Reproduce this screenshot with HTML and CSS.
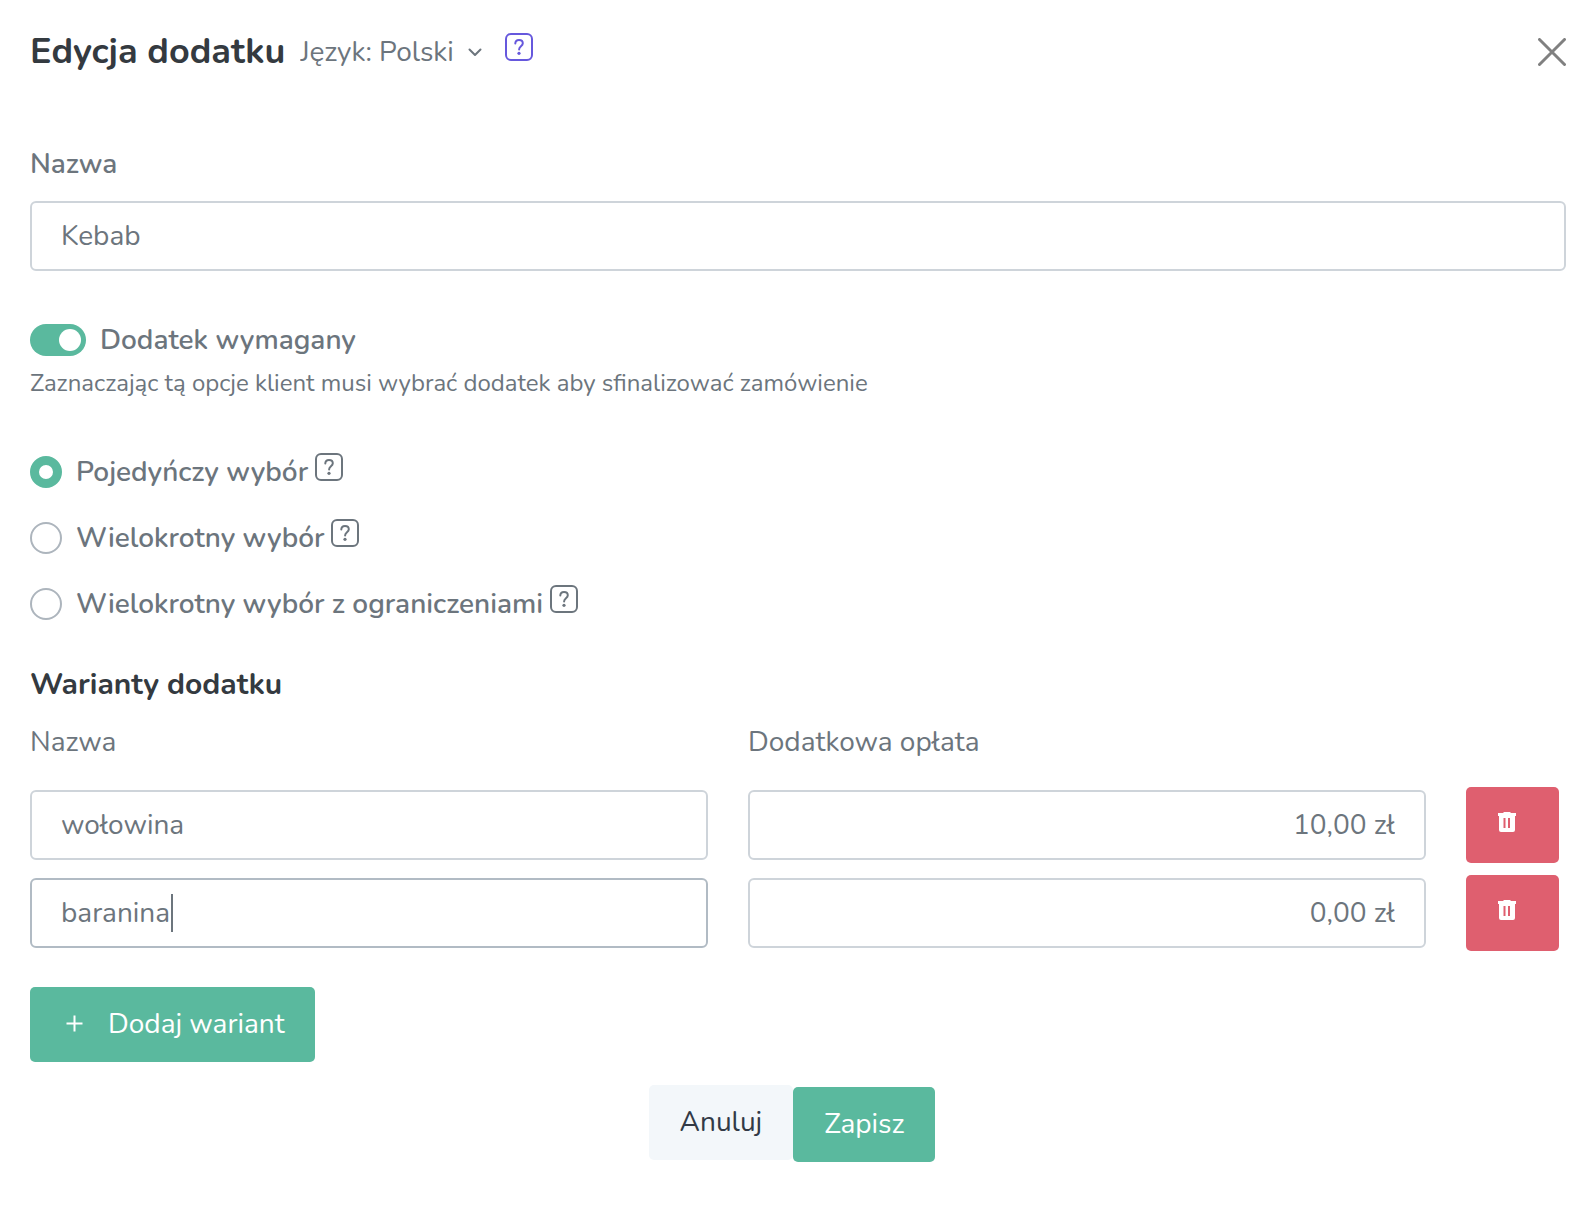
FILE: index.html
```html
<!DOCTYPE html>
<html lang="pl">
<head>
    <meta charset="UTF-8">
    <meta name="viewport" content="width=device-width, initial-scale=1">
    <title>Edycja dodatku</title>
    <link rel="stylesheet" href="styles.css">
</head>
<body>
<svg class="sprite" aria-hidden="true">
    <symbol id="icon-help" viewBox="0 0 28 28">
        <rect x="1" y="1" width="26" height="26" rx="5" fill="none" stroke="currentColor" stroke-width="2"/>
        <path d="M10.3 10.6C10.3 8.2 11.9 6.9 14 6.9c2.200 0 3.800 1.400 3.800 3.400 0 3-3.700 3.100-3.700 6.200" fill="none" stroke="currentColor" stroke-width="2" stroke-linecap="round"/>
        <circle cx="14" cy="20.300" r="1.600" fill="currentColor"/>
    </symbol>
    <symbol id="icon-trash" viewBox="0 0 18 20">
        <path fill="currentColor" fill-rule="evenodd" d="M5.500 0h7v1H18v3h-1v14a2 2 0 0 1-2 2H3a2 2 0 0 1-2-2V4H0V1h5.500zM5.500 6v10h2V6zM10 6v10h2V6z"/>
    </symbol>
</svg>
<form class="modal">
    <header class="modal-header">
        <h1 class="title">Edycja dodatku</h1>
        <div class="lang">
            <select class="lang-select" aria-label="Język">
                <option>Język: Polski</option>
            </select>
            <svg class="chevron" viewBox="0 0 14 9" aria-hidden="true"><path d="M1.500 1.500L7 7l5.500-5.500" fill="none" stroke="currentColor" stroke-width="2" stroke-linecap="round" stroke-linejoin="round"/></svg>
        </div>
        <button type="button" class="help help-main" aria-label="Pomoc"><svg><use href="#icon-help"/></svg></button>
        <button type="button" class="close" aria-label="Zamknij">
            <svg viewBox="0 0 28 28"><path d="M1.500 1.500l25 25M26.500 1.500l-25 25" stroke="currentColor" stroke-width="3" stroke-linecap="round"/></svg>
        </button>
    </header>

    <div class="field">
        <label class="label" for="name">Nazwa</label>
        <input class="input" id="name" type="text" value="Kebab">
    </div>

    <div class="required">
        <label class="check"><input class="switch" type="checkbox" checked>Dodatek wymagany</label>
        <p class="hint">Zaznaczając tą opcje klient musi wybrać dodatek aby sfinalizować zamówienie</p>
    </div>

    <div class="choices">
        <div class="choice">
            <label class="check"><input class="radio" type="radio" name="choice" checked>Pojedyńczy wybór</label>
            <button type="button" class="help" aria-label="Pomoc"><svg><use href="#icon-help"/></svg></button>
        </div>
        <div class="choice">
            <label class="check"><input class="radio" type="radio" name="choice">Wielokrotny wybór</label>
            <button type="button" class="help" aria-label="Pomoc"><svg><use href="#icon-help"/></svg></button>
        </div>
        <div class="choice">
            <label class="check"><input class="radio" type="radio" name="choice">Wielokrotny wybór z ograniczeniami</label>
            <button type="button" class="help" aria-label="Pomoc"><svg><use href="#icon-help"/></svg></button>
        </div>
    </div>

    <h2 class="subtitle">Warianty dodatku</h2>
    <div class="row row-head">
        <label for="variant-1">Nazwa</label>
        <label for="price-1">Dodatkowa opłata</label>
    </div>
    <div class="row">
        <input class="input" id="variant-1" type="text" value="wołowina">
        <input class="input price" id="price-1" type="text" value="10,00 zł">
        <button type="button" class="btn btn-delete" aria-label="Usuń"><svg><use href="#icon-trash"/></svg></button>
    </div>
    <div class="row">
        <div class="active">
            <input class="input" type="text" value="baranina" aria-label="Nazwa">
        </div>
        <input class="input price" type="text" value="0,00 zł" aria-label="Dodatkowa opłata">
        <button type="button" class="btn btn-delete" aria-label="Usuń"><svg><use href="#icon-trash"/></svg></button>
    </div>

    <button type="button" class="btn btn-green btn-add">
        <svg viewBox="0 0 17 17" aria-hidden="true"><path d="M8.500 0.500v16M0.500 8.500h16" stroke="currentColor" stroke-width="2"/></svg>
        Dodaj wariant
    </button>

    <footer class="modal-footer">
        <button type="button" class="btn btn-light">Anuluj</button>
        <button type="submit" class="btn btn-green btn-save">Zapisz</button>
    </footer>
</form>
</body>
</html>
```
FILE: styles.css
```css
*{
    box-sizing: border-box;
    margin: 0;
    padding: 0;
}
body{
    background: #fff;
    color: #6c757d;
    font-family: Nunito, Lato, sans-serif;
    font-size: 28px;
    line-height: 42px;
}
input,select,button{
    font: inherit;
    color: inherit;
    border: 0;
    background: none;
}
button,select{
    cursor: pointer;
}
svg{
    display: block;
}
.sprite{
    display: none;
}
.modal{
    padding: 29px 26px 60px 30px;
}
.modal-header{
    display: flex;
    align-items: center;
    height: 46px;
}
.title{
    color: #343a40;
    font-size: 36px;
    line-height: 46px;
    font-weight: 700;
}
.lang{
    display: flex;
    align-items: center;
    position: relative;
    margin-left: 15px;
}
.lang-select{
    appearance: none;
    padding-right: 28px;
}
.chevron{
    position: absolute;
    right: 0;
    width: 14px;
    height: 9px;
    pointer-events: none;
}
.help{
    align-self: flex-start;
    width: 28px;
    height: 28px;
}
.help svg{
    width: 28px;
    height: 28px;
}
.help-main{
    margin: 4px 0 0 23px;
    color: #6658dd;
}
.close{
    margin-left: auto;
    color: #808080;
}
.close svg{
    width: 28px;
    height: 28px;
}
.field{
    margin-top: 68px;
}
.label{
    display: block;
    margin-bottom: 16px;
    font-weight: 600;
}
.input{
    display: block;
    width: 100%;
    height: 70px;
    padding: 0 29px;
    border: 2px solid #ced4da;
    border-radius: 6px;
    background: #fff;
}
.required{
    margin-top: 48px;
}
.check{
    display: flex;
    align-items: center;
    gap: 14px;
    font-weight: 600;
}
.switch{
    appearance: none;
    display: flex;
    align-items: center;
    justify-content: flex-end;
    width: 56px;
    height: 32px;
    padding-right: 5px;
    border-radius: 16px;
    background: #5ab99e;
}
.switch::before{
    content: "";
    width: 22px;
    height: 22px;
    border-radius: 50%;
    background: #fff;
}
.hint{
    margin-top: 4px;
    font-size: 24px;
    line-height: 36px;
}
.choices{
    display: grid;
    gap: 24px;
    margin-top: 50px;
}
.choice{
    display: flex;
    gap: 7px;
}
.choice .help{
    margin-top: 2px;
}
.radio{
    appearance: none;
    width: 32px;
    height: 32px;
    border: 2px solid #adb5bd;
    border-radius: 50%;
}
.radio:checked{
    border: 9px solid #5ab99e;
}
.subtitle{
    margin-top: 42px;
    color: #343a40;
    font-size: 30px;
    line-height: 36px;
    font-weight: 700;
}
.row{
    display: grid;
    grid-template-columns: 1fr 1fr 93px;
    column-gap: 40px;
    align-items: center;
    margin-top: 12px;
    padding-right: 7px;
}
.row-head{
    margin: 18px 0 24px;
}
.price{
    text-align: right;
}
.active{
    position: relative;
}
.active .input{
    border-color: #b1bbc4;
    caret-color: transparent;
}
/* text cursor */
.active::after{
    content: "";
    position: absolute;
    top: 16px;
    left: 141px;
    width: 2px;
    height: 38px;
    background: #6c757d;
}
.btn{
    height: 75px;
    padding: 0 31px 2px;
    border-radius: 5px;
}
.btn-green{
    background: #5ab99e;
    color: #fff;
}
.btn-light{
    background: #f3f7fa;
    color: #323a46;
}
.btn-delete{
    height: 76px;
    padding: 0 32px 6px;
    background: #df5f6f;
    color: #fff;
}
.btn-delete svg{
    width: 18px;
    height: 20px;
}
.btn-add{
    display: flex;
    align-items: center;
    gap: 25px;
    margin-top: 36px;
    padding: 0 30px 2px 36px;
}
.btn-add svg{
    width: 17px;
    height: 17px;
}
.modal-footer{
    display: flex;
    justify-content: center;
    margin-top: 23px;
    padding-right: 12px;
}
.btn-save{
    margin-top: 2px;
}
```
